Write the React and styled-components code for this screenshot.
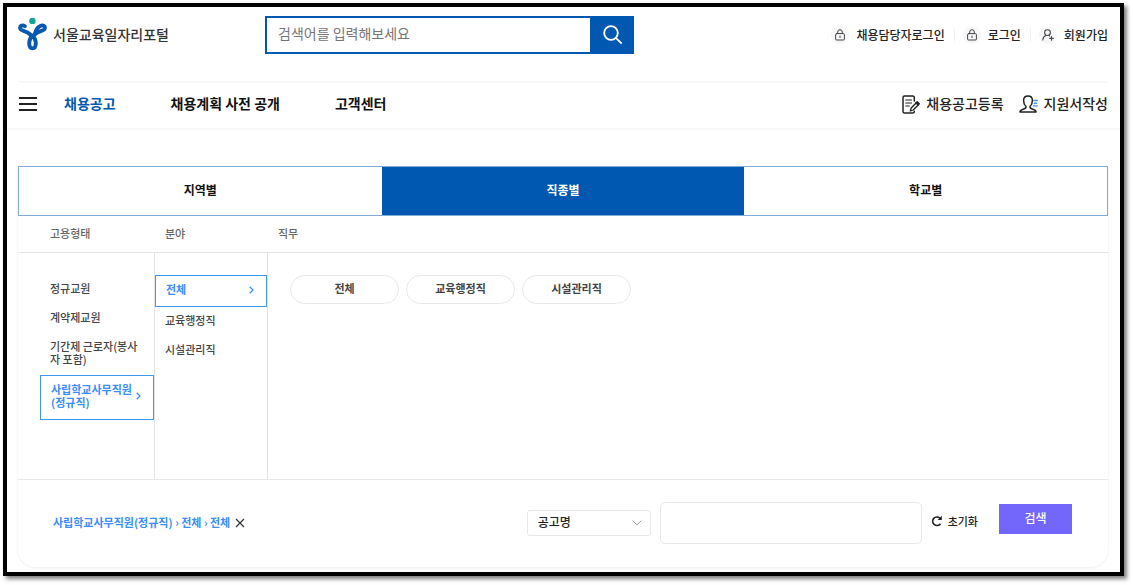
import { useState } from 'react';
import styled, { createGlobalStyle } from 'styled-components';

const GlobalStyles = createGlobalStyle`
  * {
    box-sizing: border-box;
  }
  body {
    margin: 0;
    background: #fff;
    color: #222;
    font-family: 'Noto Sans CJK KR', sans-serif;
    font-size: 12px;
  }
  button, input, select {
    font: inherit;
    color: inherit;
  }
  button {
    padding: 0;
    border: 0;
    background: none;
    cursor: pointer;
  }
  a {
    color: inherit;
    text-decoration: none;
  }
  ul {
    list-style: none;
    margin: 0;
    padding: 0;
  }
  svg {
    display: block;
    flex: none;
  }
`;

const Frame = styled.div`
  margin: 3px 9px 9px 3px;
  border: 4px solid #000;
  background: #fff;
  box-shadow: 3px 3px 4px rgba(0, 0, 0, 0.5);
`;

const TopBar = styled.div`
  display: flex;
  align-items: center;
  margin: 0 12px 0 11px;
  padding: 9px 0 27px;
  border-bottom: 2px solid #f8f8f8;
`;

const Logo = styled.a`
  display: flex;
  align-items: center;
  gap: 5px;
  flex: 0 0 247px;
  padding-bottom: 3px;
  font-size: 14px;
  font-weight: 500;
  line-height: 20px;
  color: #333;
`;

const SearchForm = styled.form`
  display: flex;
  flex: 0 1 369px;
  height: 38px;
  border: 2px solid #0058b0;
  input {
    flex: 1;
    min-width: 0;
    border: 0;
    padding: 0 11px 4px;
    font-size: 14px;
    outline: none;
  }
  input::placeholder {
    color: #757575;
    opacity: 1;
  }
  button {
    display: flex;
    align-items: center;
    justify-content: center;
    width: 42px;
    padding-left: 3px;
    background: #0058b0;
    color: #fff;
  }
`;

const UserLinks = styled.ul`
  display: flex;
  align-items: center;
  margin-left: auto;
  font-weight: 500;
  line-height: 18px;
  li + li {
    margin-left: 9px;
    padding-left: 9px;
    background: linear-gradient(#eee, #eee) left center / 1px 12px no-repeat;
  }
  a {
    display: flex;
    align-items: center;
    gap: 7px;
  }
`;

const IconDisc = styled.span`
  display: grid;
  place-items: center;
  width: 18px;
  height: 18px;
  border-radius: 50%;
  background: #f6f6f8;
`;

const Nav = styled.nav`
  display: flex;
  align-items: center;
  height: 47px;
  padding: 0 12px 3px 11px;
  border-bottom: 2px solid #f8f8f8;
  font-size: 14px;
  line-height: 20px;
  button {
    margin-right: 26px;
  }
`;

const MenuLinks = styled.ul`
  display: flex;
  gap: 55px;
  padding-bottom: 2px;
  font-weight: 700;
`;

const MenuLink = styled.a`
  color: ${(props) => (props.$active ? '#0058b0' : '#111')};
`;

const Shortcuts = styled.ul`
  display: flex;
  gap: 15px;
  margin-left: auto;
  font-weight: 500;
  a {
    display: flex;
    align-items: center;
    gap: 6px;
  }
  span {
    padding-bottom: 2px;
  }
`;

const Panel = styled.section`
  margin: 36px 12px 5px 11px;
  border-radius: 0 0 18px 18px;
  box-shadow: 0 1px 3px rgba(0, 0, 0, 0.08);
`;

const Tabs = styled.div`
  display: grid;
  grid-template-columns: repeat(3, 1fr);
  height: 50px;
  border: 1px solid #7fabd8;
`;

const Tab = styled.button`
  padding-bottom: 3px;
  font-weight: 700;
  line-height: 18px;
  background: ${(props) => (props.$active ? '#0058b0' : '#fff')};
  color: ${(props) => (props.$active ? '#fff' : '#111')};
`;

const Columns = styled.div`
  display: grid;
  grid-template-columns: 137px 113px 1fr;
  font-size: 11px;
  line-height: 13px;
`;

const ColumnTitles = styled(Columns)`
  align-items: center;
  height: 37px;
  padding-bottom: 2px;
  border-bottom: 1px solid #e3e4e6;
  font-weight: 500;
  color: #666;
  span:first-child {
    padding-left: 32px;
  }
  span {
    padding-left: 10px;
  }
`;

const ColumnBody = styled(Columns)`
  height: 227px;
  border-bottom: 1px solid #e8e8e8;
`;

const OptionList = styled.ul`
  padding-top: 22px;
  padding-left: ${(props) => props.$indent || 0};
  border-right: 1px solid #e3e4e6;
`;

const Option = styled.button`
  display: flex;
  align-items: center;
  justify-content: space-between;
  width: 100%;
  padding: 7px 10px 9px;
  text-align: left;
  font-weight: 500;
  line-height: 13px;
  color: #444;
`;

const SelectedOption = styled(Option)`
  padding: 7px 12px 10px 10px;
  min-height: 32px;
  border: 1px solid #3d97ee;
  font-weight: 700;
  color: #3a8dfa;
`;

const Pills = styled.div`
  display: flex;
  align-items: flex-start;
  flex-wrap: wrap;
  gap: 7px;
  padding: 22px;
`;

const Pill = styled.button`
  width: 109px;
  height: 29px;
  padding-bottom: 2px;
  border: 1px solid #e8e8e8;
  border-radius: 15px;
  font-weight: 700;
  color: #444;
`;

const Footer = styled.form`
  display: flex;
  align-items: center;
  padding: 22px 36px 23px 35px;
`;

const Path = styled.div`
  display: flex;
  align-items: center;
  gap: 5px;
  margin-right: auto;
  font-size: 11px;
  font-weight: 700;
  line-height: 16px;
  color: #3a8dfa;
  span {
    padding-bottom: 2px;
  }
  button {
    color: #333;
  }
`;

const SelectBox = styled.div`
  display: grid;
  align-items: center;
  width: 124px;
  margin-right: 9px;
  select, svg {
    grid-area: 1 / 1;
  }
  select {
    appearance: none;
    height: 26px;
    padding: 0 10px 3px;
    border: 1px solid #e8e8e8;
    border-radius: 3px;
    background: #fff;
    font-weight: 500;
  }
  svg {
    justify-self: end;
    margin-right: 9px;
    pointer-events: none;
  }
`;

const Keyword = styled.input`
  width: 262px;
  height: 42px;
  padding: 0 10px;
  border: 1px solid #e8e8e8;
  border-radius: 5px;
`;

const Reset = styled.button`
  display: flex;
  align-items: center;
  gap: 5px;
  margin: 0 21px 0 9px;
  padding-bottom: 4px;
  font-size: 11px;
  font-weight: 500;
`;

const Submit = styled.button`
  width: 73px;
  height: 30px;
  margin-bottom: 8px;
  padding-bottom: 3px;
  background: #7367fb;
  color: #fff;
  font-weight: 500;
`;

function LogoMark() {
  return (
    <svg width="30" height="34" viewBox="0 0 30 34" fill="none">
      <circle cx="14.400" cy="3.900" r="3.200" fill="#12a594" />
      <g stroke="#0a57b0" strokeWidth="3.900" strokeLinecap="round" strokeLinejoin="round">
        <path d="M6.800 9.200C4 7.500 1.700 9 2.200 11.500c.8 2.700 5.500 2.200 8.800 5 1.300 1.200 2.500 2.200 3.500 3.200 1-1 2.200-2 3.500-3.200 3.300-2.800 8-2.300 8.800-5 .5-2.500-1.800-4-4.600-2.500-2.700 1.200-4 3.500-5 6.500" />
        <path d="M14.500 18.500c-2.500 2.800-3.500 5.500-3.300 8 .1 3 1.500 4.900 3.300 4.900s3.200-1.900 3.300-4.900c.2-2.500-.8-5.200-3.300-8z" />
      </g>
    </svg>
  );
}

function LockIcon() {
  return (
    <svg width="10" height="12" viewBox="0 0 10 12" fill="none" stroke="#444" strokeLinecap="round">
      <rect x="0.600" y="4.600" width="8.800" height="6.400" rx="1" />
      <path d="M2.700 4.500V3a2.300 2.300 0 0 1 4.600 0v1.500M5 7v1.500" />
    </svg>
  );
}

function JoinIcon() {
  return (
    <svg width="12" height="12" viewBox="0 0 12 12" fill="none" stroke="#444" strokeWidth="1.100" strokeLinecap="round">
      <circle cx="5.500" cy="3.600" r="2.900" />
      <path d="M.8 11c.2-2.500 1.300-4 3-4.600M7 6.300l.7.700M9.500 7.600v3.600M7.700 9.400h3.600" />
    </svg>
  );
}

function PostIcon() {
  return (
    <svg width="18" height="19" viewBox="0 0 18 19" fill="none" stroke="#222" strokeWidth="1.500" strokeLinecap="round" strokeLinejoin="round">
      <path d="M12.300 6V2.500a1.500 1.500 0 0 0-1.500-1.500H2.500A1.500 1.500 0 0 0 1 2.500v13.800A1.500 1.500 0 0 0 2.500 18h8.300a1.500 1.500 0 0 0 1.500-1.700" />
      <path d="M3.800 5h5.700M3.800 8h5.700M3.800 11h3.500" strokeWidth="1.200" />
      <path d="M8.300 16l.9-3 5.200-5.200 2 2-5.200 5.200z" strokeWidth="1.300" />
      <path d="M14 7.800l1.200-1 2 2-1 1.200z" fill="#222" />
    </svg>
  );
}

function ApplyIcon() {
  return (
    <svg width="19" height="18" viewBox="0 0 19 18" fill="none" stroke="#222" strokeWidth="1.500" strokeLinecap="round" strokeLinejoin="round">
      <path d="M7 11.500C5.300 9.900 4.600 7.700 4.600 5.400 4.600 2.600 6.500.9 9 .9s4.400 1.700 4.400 4.500c0 2.300-.7 4.500-2.400 6.100-.2 1.500.5 2 2.200 2.500 2.300.7 3.700 1.200 3.900 3.100H.9c.2-1.900 1.600-2.400 3.900-3.100 1.700-.5 2.400-1 2.200-2.500z" />
      <path d="M14.800 5.500h3.500M15.300 8.200h2.200M14.500 10.900h3.800" stroke="#3a96fa" strokeWidth="1.400" />
    </svg>
  );
}

function Chevron() {
  return (
    <svg width="5" height="8" viewBox="0 0 5 8" fill="none" stroke="#3a8dfa" strokeWidth="1.300">
      <path d="M.7.700L4 4 .7 7.300" />
    </svg>
  );
}

const jobs = ['전체', '교육행정직', '시설관리직'];

function App() {
  const [tab, setTab] = useState('직종별');

  return (
    <>
      <GlobalStyles />
      <Frame>
        <header>
          <TopBar>
            <Logo href="#">
              <LogoMark />
              서울교육일자리포털
            </Logo>
            <SearchForm onSubmit={(e) => e.preventDefault()}>
              <input type="text" aria-label="통합검색" placeholder="검색어를 입력해보세요" />
              <button type="submit" aria-label="검색">
                <svg width="20" height="20" viewBox="0 0 20 20" fill="none" stroke="#fff" strokeWidth="1.800">
                  <circle cx="8" cy="8" r="6.800" />
                  <path d="M12.800 12.800L18.700 18.700" />
                </svg>
              </button>
            </SearchForm>
            <UserLinks>
              <li>
                <a href="#"><IconDisc><LockIcon /></IconDisc>채용담당자로그인</a>
              </li>
              <li>
                <a href="#"><IconDisc><LockIcon /></IconDisc>로그인</a>
              </li>
              <li>
                <a href="#"><IconDisc><JoinIcon /></IconDisc>회원가입</a>
              </li>
            </UserLinks>
          </TopBar>
          <Nav>
            <button type="button" aria-label="전체메뉴">
              <svg width="20" height="14" viewBox="0 0 20 14" stroke="#222" strokeWidth="2">
                <path d="M1 1h18M1 7h18M1 13h18" />
              </svg>
            </button>
            <MenuLinks>
              <li><MenuLink href="#" $active>채용공고</MenuLink></li>
              <li><MenuLink href="#">채용계획 사전 공개</MenuLink></li>
              <li><MenuLink href="#">고객센터</MenuLink></li>
            </MenuLinks>
            <Shortcuts>
              <li><a href="#"><PostIcon /><span>채용공고등록</span></a></li>
              <li><a href="#"><ApplyIcon /><span>지원서작성</span></a></li>
            </Shortcuts>
          </Nav>
        </header>

        <Panel>
          <Tabs>
            {['지역별', '직종별', '학교별'].map((name) => (
              <Tab key={name} type="button" $active={tab === name} onClick={() => setTab(name)}>
                {name}
              </Tab>
            ))}
          </Tabs>
          <ColumnTitles>
            <span>고용형태</span>
            <span>분야</span>
            <span>직무</span>
          </ColumnTitles>
          <ColumnBody>
            <OptionList $indent="22px">
              <li><Option type="button">정규교원</Option></li>
              <li><Option type="button">계약제교원</Option></li>
              <li><Option type="button">기간제 근로자(봉사자 포함)</Option></li>
              <li>
                <SelectedOption type="button">사립학교사무직원(정규직)<Chevron /></SelectedOption>
              </li>
            </OptionList>
            <OptionList>
              <li>
                <SelectedOption type="button">전체<Chevron /></SelectedOption>
              </li>
              <li><Option type="button">교육행정직</Option></li>
              <li><Option type="button">시설관리직</Option></li>
            </OptionList>
            <Pills>
              {jobs.map((job) => (
                <Pill key={job} type="button">{job}</Pill>
              ))}
            </Pills>
          </ColumnBody>
          <Footer onSubmit={(e) => e.preventDefault()}>
            <Path>
              <span>사립학교사무직원(정규직) › 전체 › 전체</span>
              <button type="button" aria-label="선택 해제">
                <svg width="10" height="10" viewBox="0 0 10 10" stroke="#333" strokeWidth="1.200">
                  <path d="M1 1l8 8M9 1L1 9" />
                </svg>
              </button>
            </Path>
            <SelectBox>
              <select aria-label="검색 구분" defaultValue="공고명">
                <option>공고명</option>
              </select>
              <svg width="10" height="6" viewBox="0 0 10 6" fill="none" stroke="#999">
                <path d="M.7.700L5 4.800 9.300.700" />
              </svg>
            </SelectBox>
            <Keyword type="text" aria-label="검색어" />
            <Reset type="reset">
              <svg width="12" height="12" viewBox="0 0 12 12" fill="none" stroke="#222" strokeWidth="1.600">
                <path d="M9.500 8.700A4.300 4.300 0 1 1 9 3.200" />
                <path d="M10.800.800v4.200H6.600z" fill="#222" stroke="none" />
              </svg>
              초기화
            </Reset>
            <Submit type="submit">검색</Submit>
          </Footer>
        </Panel>
      </Frame>
    </>
  );
}

export default App;
